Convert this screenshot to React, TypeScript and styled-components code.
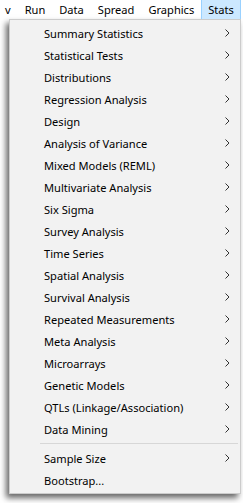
import React from "react";
import styled, { createGlobalStyle } from "styled-components";

const GlobalStyle = createGlobalStyle`
  html, body {
    margin: 0;
    padding: 0;
    background: #ffffff;
    overflow: hidden;
  }
  body {
    font-family: "Noto Sans", "Open Sans", sans-serif;
    font-size: 11.1px;
    color: #000;
  }
`;

const Screen = styled.div`
  width: 243px;
  height: 503px;
  overflow: hidden;
  background: #fff;
`;

const MenuBar = styled.div`
  display: flex;
  align-items: stretch;
  height: 19px;
  background: #fff;
  margin-left: -2px;
`;

const BarItem = styled.div<{ $active?: boolean }>`
  display: flex;
  align-items: center;
  flex-shrink: 0;
  padding: 0 6px;
  white-space: nowrap;
  background: ${(p) => (p.$active ? "#cce8ff" : "transparent")};
  border: 1px solid ${(p) => (p.$active ? "#99d1ff" : "transparent")};
  border-bottom: none;
  border-top: none;
`;

const DropArea = styled.div`
  padding-left: 9px;
`;

const Menu = styled.div`
  width: 232px;
  box-sizing: border-box;
  background: #f2f2f2;
  border: 1px solid #cccccc;
  padding: 2px;
  box-shadow: -3px 4px 6px rgba(0, 0, 0, 0.6);
`;

const Item = styled.div`
  display: flex;
  align-items: center;
  height: 22px;
  padding-left: 32px;
  padding-right: 8px;
  white-space: nowrap;
`;

const Label = styled.span`
  flex: 1;
`;

const Separator = styled.div`
  height: 7px;
  margin-left: 28px;
  display: flex;
  align-items: center;
  &::after {
    content: "";
    flex: 1;
    height: 1px;
    background: #d7d7d7;
  }
`;

const Chevron = () => (
  <svg width="5" height="8" viewBox="0 0 5 8">
    <polyline points="0.5,0.5 4,4 0.5,7.5" fill="none" stroke="#333" strokeWidth="1" />
  </svg>
);

const items = [
  "Summary Statistics",
  "Statistical Tests",
  "Distributions",
  "Regression Analysis",
  "Design",
  "Analysis of Variance",
  "Mixed Models (REML)",
  "Multivariate Analysis",
  "Six Sigma",
  "Survey Analysis",
  "Time Series",
  "Spatial Analysis",
  "Survival Analysis",
  "Repeated Measurements",
  "Meta Analysis",
  "Microarrays",
  "Genetic Models",
  "QTLs (Linkage/Association)",
  "Data Mining",
];

export default function App() {
  return (
    <Screen>
      <GlobalStyle />
      <MenuBar>
        <BarItem>v</BarItem>
        <BarItem>Run</BarItem>
        <BarItem>Data</BarItem>
        <BarItem>Spread</BarItem>
        <BarItem>Graphics</BarItem>
        <BarItem $active>Stats</BarItem>
      </MenuBar>
      <DropArea>
        <Menu>
          {items.map((label) => (
            <Item key={label}>
              <Label>{label}</Label>
              <Chevron />
            </Item>
          ))}
          <Separator />
          <Item>
            <Label>Sample Size</Label>
            <Chevron />
          </Item>
          <Item>
            <Label>Bootstrap...</Label>
          </Item>
        </Menu>
      </DropArea>
    </Screen>
  );
}
